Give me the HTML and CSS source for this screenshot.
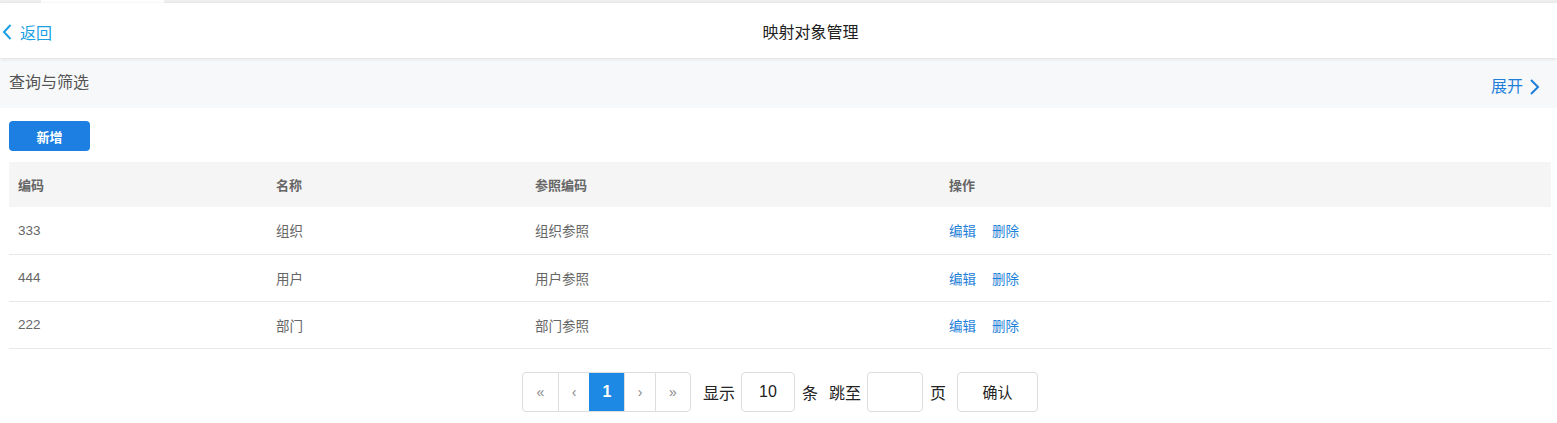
FILE: index.html
```html
<!DOCTYPE html>
<html lang="zh">
<head>
<meta charset="utf-8">
<title>映射对象管理</title>
<link rel="stylesheet" href="styles.css">
</head>
<body>
<div class="tabs"><span class="tab"></span></div>
<header class="nav">
  <a class="back">
    <svg class="back-icon" width="10" height="16" viewBox="0 0 10 16"><path d="M8.5 1 L2 8 L8.5 15" fill="none" stroke="currentColor" stroke-width="2"/></svg>
    <span>返回</span>
  </a>
  <h1 class="title">映射对象管理</h1>
</header>
<section class="filter">
  <span class="filter-title">查询与筛选</span>
  <a class="expand">展开
    <svg width="12" height="16" viewBox="0 0 12 16"><path d="M2 1 L9 8 L2 15" fill="none" stroke="currentColor" stroke-width="2"/></svg>
  </a>
</section>
<div class="toolbar"><button class="btn-primary">新增</button></div>
<table class="grid">
  <colgroup><col class="c1"><col class="c2"><col class="c3"><col></colgroup>
  <thead>
    <tr><th>编码</th><th>名称</th><th>参照编码</th><th>操作</th></tr>
  </thead>
  <tbody>
    <tr><td>333</td><td>组织</td><td>组织参照</td><td><a class="op">编辑</a><a class="op">删除</a></td></tr>
    <tr><td>444</td><td>用户</td><td>用户参照</td><td><a class="op">编辑</a><a class="op">删除</a></td></tr>
    <tr><td>222</td><td>部门</td><td>部门参照</td><td><a class="op">编辑</a><a class="op">删除</a></td></tr>
  </tbody>
</table>
<nav class="pager">
  <div class="pages">
    <span class="pg pg-w">«</span>
    <span class="pg">‹</span>
    <span class="pg pg-w active">1</span>
    <span class="pg">›</span>
    <span class="pg pg-w">»</span>
  </div>
  <span class="lbl">显示</span>
  <span class="box box-size">10</span>
  <span class="lbl lbl-tight">条</span>
  <span class="lbl lbl-mid">跳至</span>
  <span class="box box-jump"></span>
  <span class="lbl lbl-page">页</span>
  <button class="btn-confirm">确认</button>
</nav>
</body>
</html>
```
FILE: styles.css
```css
* { box-sizing: border-box; }
body {
  margin: 0;
  font-family: "Liberation Sans", "Noto Sans CJK SC", sans-serif;
  color: #333;
  background: #fff;
}
.tabs {
  height: 3px;
  background: #efefef;
  display: flex;
}
.tab {
  margin-left: 41px;
  width: 123px;
  background: #fff;
}
.nav {
  height: 55px;
  display: flex;
  align-items: center;
  background: #fff;
  box-shadow: 0 1px 3px rgba(0,0,0,0.16);
  position: relative;
}
.back {
  width: 64px;
  display: flex;
  align-items: center;
  gap: 8px;
  padding-left: 2px;
  color: #1a9fe3;
  font-size: 16px;
  padding-top: 3px;
}
.title {
  flex: 1;
  margin: 0;
  text-align: center;
  font-size: 16px;
  font-weight: normal;
  color: #222;
}
.filter {
  margin-top: 2px;
  height: 48px;
  background: #f7f8fa;
  display: flex;
  justify-content: space-between;
  padding: 0 16px 0 9px;
}
.filter-title {
  font-size: 16px;
  color: #555;
  line-height: 22px;
  padding-top: 12px;
}
.expand {
  font-size: 16px;
  color: #1e7fd8;
  line-height: 22px;
  padding-top: 16px;
  display: flex;
  gap: 6px;
  align-items: flex-start;
}
.expand svg { margin-top: 3px; }
.toolbar {
  padding: 13px 9px 11px;
}
.btn-primary {
  width: 81px;
  height: 30px;
  border: none;
  border-radius: 4px;
  background: #1e7fe3;
  color: #fff;
  font-family: inherit;
  font-size: 13px;
  font-weight: bold;
  padding: 0;
}
.grid {
  margin: 0 6px 0 9px;
  width: calc(100% - 15px);
  border-collapse: collapse;
  table-layout: fixed;
  font-size: 13.5px;
  color: #666;
}
.c1 { width: 258px; }
.c2 { width: 259px; }
.c3 { width: 414px; }
.grid th {
  height: 45px;
  background: #f5f5f5;
  text-align: left;
  font-weight: bold;
  font-size: 13px;
  padding: 0 9px;
}
.grid td {
  height: 47px;
  padding: 0 9px;
  border-bottom: 1px solid #e8e8e8;
}
.op {
  color: #1e7fd8;
  margin-right: 16px;
}
.pager {
  margin-top: 23px;
  display: flex;
  justify-content: center;
  align-items: center;
  padding-left: 3px;
}
.pages {
  display: flex;
  height: 40px;
  border: 1px solid #ddd;
  border-radius: 4px;
  overflow: hidden;
}
.pg {
  width: 31px;
  display: flex;
  align-items: center;
  justify-content: center;
  color: #888;
  font-size: 14px;
  border-left: 1px solid #ddd;
}
.pg:first-child { border-left: none; }
.pg-w { width: 35px; }
.pg.active {
  background: #1e88e5;
  color: #fff;
  font-weight: bold;
  font-size: 16px;
  border-left-color: #1e88e5;
}
.lbl {
  font-size: 16px;
  color: #222;
  margin: 0 6px 0 12px;
}
.lbl-tight { margin: 0 0 0 7px; }
.lbl-mid { margin: 0 6px 0 11px; }
.lbl-page { margin: 0 0 0 7px; }
.box {
  height: 40px;
  border: 1px solid #ddd;
  border-radius: 4px;
  display: flex;
  align-items: center;
  justify-content: center;
  font-size: 16px;
  color: #222;
}
.box-size { width: 54px; }
.box-jump { width: 56px; }
.btn-confirm {
  margin-left: 11px;
  width: 81px;
  height: 40px;
  border: 1px solid #ddd;
  border-radius: 4px;
  background: #fff;
  font-family: inherit;
  font-size: 15px;
  color: #222;
  padding: 0;
}
```
